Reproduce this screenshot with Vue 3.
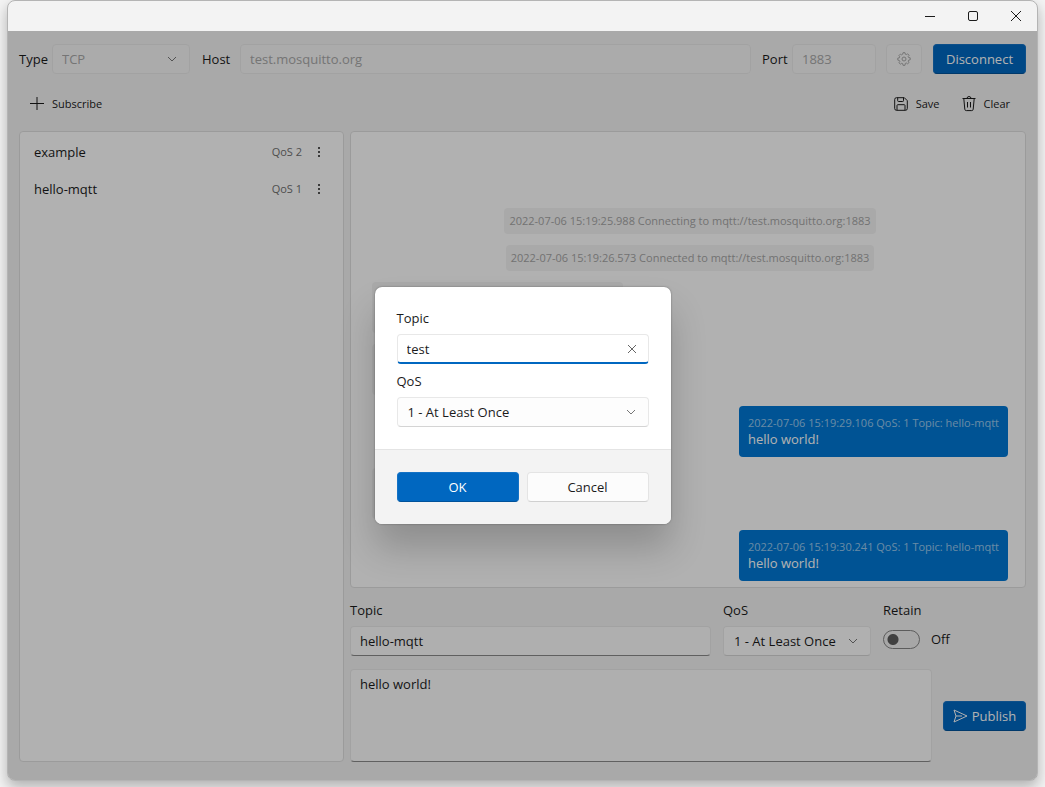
<script setup>
import { ref } from 'vue'

const subscriptions = ref([
  { topic: 'example', qos: 2 },
  { topic: 'hello-mqtt', qos: 1 },
])

const messages = ref([
  { kind: 'notice', head: '2022-07-06 15:19:25.988 Connecting to mqtt://test.mosquitto.org:1883' },
  { kind: 'notice', head: '2022-07-06 15:19:26.573 Connected to mqtt://test.mosquitto.org:1883' },
  { kind: 'received' },
  { kind: 'received' },
  { kind: 'sent', head: '2022-07-06 15:19:29.106 QoS: 1 Topic: hello-mqtt', body: 'hello world!' },
  { kind: 'received' },
  { kind: 'sent', head: '2022-07-06 15:19:30.241 QoS: 1 Topic: hello-mqtt', body: 'hello world!' },
])

const host = ref('test.mosquitto.org')
const port = ref('1883')
const publishTopic = ref('hello-mqtt')
const payload = ref('hello world!')
const retain = ref(false)
const newTopic = ref('test')
</script>

<template>
  <div class="desktop">
  <div class="window">
    <header class="titlebar">
      <button class="caption" aria-label="Minimize">
        <svg width="12" height="12" viewBox="0 0 12 12"><path d="M1 6.5h10" /></svg>
      </button>
      <button class="caption" aria-label="Maximize">
        <svg width="12" height="12" viewBox="0 0 12 12"><rect x="1.5" y="1.5" width="9" height="9" rx="1.5" /></svg>
      </button>
      <button class="caption" aria-label="Close">
        <svg width="12" height="12" viewBox="0 0 12 12"><path d="M1 1l10 10M11 1L1 11" /></svg>
      </button>
    </header>

    <div class="client">
      <main class="app">
        <div class="connection">
          <label class="lead" for="type">Type</label>
          <div class="select type">
            <select id="type" disabled><option>TCP</option></select>
            <svg class="chevron" width="10" height="10" viewBox="0 0 10 10"><path d="M1 3l4 4 4-4" /></svg>
          </div>
          <label class="host-label" for="host">Host</label>
          <input id="host" v-model="host" class="field host" disabled />
          <label class="lead" for="port">Port</label>
          <input id="port" v-model="port" class="field port" disabled />
          <button class="btn settings" aria-label="Settings" disabled>
            <svg width="14" height="14" viewBox="0 0 14 14">
              <path d="M5.7 2.2L6 .7h2l.3 1.5 1 .4 1.3-.8 1.5 1.5-.9 1.2.4 1 1.6.3v2l-1.6.4-.4 1 .9 1.2-1.5 1.4-1.3-.8-1 .4L8 13.3H6l-.3-1.6-1-.4-1.3.8-1.5-1.4.9-1.2-.4-1-1.6-.4v-2l1.6-.3.4-1-.9-1.2 1.5-1.5 1.3.8z" />
              <circle cx="7" cy="7" r="2" />
            </svg>
          </button>
          <button class="btn primary disconnect">Disconnect</button>
        </div>

        <div class="commands">
          <button class="command">
            <svg width="14" height="14" viewBox="0 0 14 14"><path d="M7 0v13M0 6.5h14" /></svg>
            Subscribe
          </button>
          <span class="spacer"></span>
          <button class="command">
            <svg width="14" height="14" viewBox="0 0 14 14">
              <path d="M2.5.7h7.8l3 3v7.8a1.8 1.8 0 0 1-1.8 1.8h-9A1.8 1.8 0 0 1 .7 11.5v-9A1.8 1.8 0 0 1 2.5.7zM3.7.7v3a.8.8 0 0 0 .8.8h4.2a.8.8 0 0 0 .8-.8v-3M3 13.3V8.5a.8.8 0 0 1 .8-.8h6.400a.8.8 0 0 1 .8.8v4.8" />
            </svg>
            Save
          </button>
          <button class="command">
            <svg width="14" height="16" viewBox="0 0 14 16">
              <path d="M.5 2.5h13M5 2.5a2 2 0 0 1 4 0M1.800 2.500l1 10.800a1.500 1.500 0 0 0 1.500 1.300h5.400a1.500 1.500 0 0 0 1.500-1.300l1-10.800M5.500 6v5.500M8.500 6v5.500" />
            </svg>
            Clear
          </button>
        </div>

        <div class="content">
          <ul class="card subscriptions">
            <li v-for="item in subscriptions" :key="item.topic">
              <span class="name">{{ item.topic }}</span>
              <span class="qos">QoS {{ item.qos }}</span>
              <button class="more" aria-label="More">
                <svg width="4" height="12" viewBox="0 0 4 12">
                  <circle cx="2" cy="2" r="1" /><circle cx="2" cy="6" r="1" /><circle cx="2" cy="10" r="1" />
                </svg>
              </button>
            </li>
          </ul>

          <div class="session">
            <div class="card messages">
              <div v-for="(m, i) in messages" :key="i" class="message" :class="m.kind">
                <span v-if="m.head" class="head">{{ m.head }}</span>
                <span v-if="m.body" class="body">{{ m.body }}</span>
              </div>
            </div>

            <div class="options">
              <div class="topic-group">
                <label for="pub-topic">Topic</label>
                <input id="pub-topic" v-model="publishTopic" class="field" />
              </div>
              <div class="qos-group">
                <label for="pub-qos">QoS</label>
                <div class="select">
                  <select id="pub-qos"><option>1 - At Least Once</option></select>
                  <svg class="chevron" width="10" height="10" viewBox="0 0 10 10"><path d="M1 3l4 4 4-4" /></svg>
                </div>
              </div>
              <div class="retain-group">
                <label for="retain">Retain</label>
                <div class="toggle">
                  <input id="retain" v-model="retain" type="checkbox" role="switch" />
                  <span>{{ retain ? 'On' : 'Off' }}</span>
                </div>
              </div>
            </div>

            <div class="publish">
              <textarea v-model="payload" class="field" aria-label="Payload"></textarea>
              <button class="btn primary send">
                <svg width="15" height="14" viewBox="0 0 15 14"><path d="M1 1l13 6-13 6 2-6zM3 7h6" /></svg>
                Publish
              </button>
            </div>
          </div>
        </div>
      </main>

      <div class="overlay">
        <form class="dialog" role="dialog" aria-label="Subscribe" @submit.prevent>
          <div class="dialog-body">
            <label for="new-topic">Topic</label>
            <div class="clearable">
              <input id="new-topic" v-model="newTopic" class="field active" />
              <button type="button" class="clear" aria-label="Clear text">
                <svg width="10" height="10" viewBox="0 0 10 10"><path d="M1 1l8 8M9 1L1 9" /></svg>
              </button>
            </div>
            <label for="new-qos">QoS</label>
            <div class="select">
              <select id="new-qos"><option>1 - At Least Once</option></select>
              <svg class="chevron" width="10" height="10" viewBox="0 0 10 10"><path d="M1 3l4 4 4-4" /></svg>
            </div>
          </div>
          <div class="dialog-footer">
            <button class="btn primary">OK</button>
            <button type="button" class="btn">Cancel</button>
          </div>
        </form>
      </div>
    </div>
  </div>
  </div>
</template>

<style>
body {
  background: #f4f4f4;
}
</style>

<style scoped>
* {
  box-sizing: border-box;
}

.desktop {
  height: 100vh;
  min-height: 647px;
  padding: 0 7px 6px;
  overflow: hidden;
}

.window {
  display: flex;
  flex-direction: column;
  height: 100%;
  border: 1px solid #b4b4b4;
  border-radius: 8px;
  overflow: hidden;
  background: #f3f3f3;
  box-shadow: 0 6px 14px rgba(0, 0, 0, 0.28);
  color: #1b1b1b;
  font: 13px/18px "Open Sans", "Noto Sans", sans-serif;
}

button,
input,
select,
textarea {
  margin: 0;
  font: inherit;
  color: inherit;
  outline: none;
}

svg {
  flex: none;
  fill: none;
  stroke: currentColor;
  stroke-width: 1;
}

.titlebar {
  display: flex;
  justify-content: flex-end;
  height: 30px;
}

.caption {
  display: grid;
  place-items: center;
  width: 43px;
  padding: 0;
  border: 0;
  background: none;
}

.client {
  position: relative;
  flex: 1;
  min-height: 0;
}

.app {
  display: flex;
  flex-direction: column;
  height: 100%;
  padding: 13px 11px 18px;
}

.connection {
  display: flex;
  align-items: center;
}

.lead {
  width: 30px;
  margin-right: 3px;
}

.connection .lead ~ .lead {
  width: 27px;
  margin: 0 3px 0 11px;
}

.host-label {
  width: 28px;
  margin: 0 10px 0 12px;
}

.field {
  width: 100%;
  height: 30px;
  padding: 0 9px;
  border: 1px solid #e8e8e8;
  border-bottom-color: #8a8a8a;
  border-radius: 4px;
  background: #fbfbfb;
}

.field:disabled,
.select select:disabled,
.btn:disabled {
  border-color: #e9e9e9;
  background: #f5f5f5;
  color: #a8a8a8;
  opacity: 1;
}

.host {
  flex: 1;
  min-width: 0;
}

.port {
  width: 84px;
}

.select {
  position: relative;
}

.select select {
  display: block;
  width: 100%;
  height: 30px;
  padding: 0 10px;
  appearance: none;
  border: 1px solid #e8e8e8;
  border-bottom-color: #d4d4d4;
  border-radius: 4px;
  background: #fdfdfd;
}

.type {
  width: 138px;
}

.type select {
  padding: 0 9px;
}

.chevron {
  position: absolute;
  top: 10px;
  right: 13px;
  color: #767676;
  pointer-events: none;
}

.btn {
  display: flex;
  align-items: center;
  justify-content: center;
  height: 30px;
  padding: 0;
  border: 1px solid #e4e4e4;
  border-bottom-color: #d0d0d0;
  border-radius: 4px;
  background: #fcfcfc;
}

.primary {
  border-color: #1472c5;
  border-bottom-color: #00529a;
  background: #0067c0;
  color: #fff;
}

.settings {
  width: 36px;
  margin: 0 11px 0 10px;
}

.disconnect {
  width: 93px;
}

.commands {
  display: flex;
  height: 57px;
  font-size: 11px;
}

.command {
  display: flex;
  align-items: center;
  gap: 8px;
  padding: 2px 11px 0;
  border: 0;
  background: none;
}

.command:last-child {
  padding-right: 16px;
}

.spacer {
  flex: 1;
}

.content {
  display: grid;
  flex: 1;
  grid-template-columns: minmax(0, 325fr) minmax(0, 676fr);
  gap: 6px;
  min-height: 0;
}

.card {
  border: 1px solid #dedede;
  border-radius: 4px;
  background: #fefefe;
}

.subscriptions {
  margin: 0;
  padding: 1px 14px;
  list-style: none;
}

.subscriptions li {
  display: flex;
  align-items: center;
  height: 37px;
}

.name {
  flex: 1;
}

.qos {
  color: #707070;
  font-size: 11px;
}

.more {
  width: 20px;
  height: 24px;
  margin-left: 7px;
  padding: 0;
  border: 0;
  background: none;
}

.more svg {
  display: block;
  margin: auto;
  fill: currentColor;
  stroke: none;
}

.session {
  display: flex;
  flex-direction: column;
  min-width: 0;
  min-height: 0;
}

.messages {
  display: flex;
  flex: 1;
  flex-direction: column;
  justify-content: flex-end;
  gap: 11px;
  min-height: 0;
  padding: 0 17px 6px 21px;
  overflow: hidden;
}

.message {
  display: flex;
  flex: none;
  flex-direction: column;
  height: 51px;
  padding: 9px 9px 0;
  border-radius: 4px;
  background: #f3f3f3;
}

.head {
  font-size: 11px;
  line-height: 16px;
}

.body {
  line-height: 17px;
}

.notice {
  align-self: center;
  height: 26px;
  padding: 5px;
  color: #a4a4a4;
}

.received {
  align-self: flex-start;
  width: 251px;
}

.sent {
  align-self: flex-end;
  background: #0078d4;
  color: #fff;
}

.sent .head {
  color: rgba(255, 255, 255, 0.6);
}

.options {
  display: flex;
  gap: 12px;
  margin-top: 11px;
}

.options label,
.dialog label {
  display: block;
  height: 27px;
  line-height: 22px;
}

.topic-group {
  flex: 1;
}

.qos-group {
  width: 148px;
}

.retain-group {
  width: 143px;
}

.toggle {
  display: flex;
  align-items: center;
  gap: 11px;
  height: 26px;
}

.toggle input {
  width: 37px;
  height: 19px;
  appearance: none;
  border: 1px solid #858585;
  border-radius: 10px;
  background: radial-gradient(circle at 9px 50%, #5c5c5c 5px, transparent 6px) #f0f0f0;
}

.publish {
  display: flex;
  align-items: center;
  gap: 11px;
  margin-top: 13px;
}

.publish textarea {
  display: block;
  flex: 1;
  height: 93px;
  padding: 5px 9px;
  resize: none;
}

.send {
  gap: 4px;
  width: 83px;
}

.overlay {
  position: absolute;
  inset: 0;
  display: grid;
  place-items: center;
  background: rgba(0, 0, 0, 0.3);
}

.dialog {
  width: 296px;
  border-radius: 7px;
  overflow: hidden;
  background: #fff;
  box-shadow: 0 0 2px rgba(0, 0, 0, 0.4), 0 24px 36px rgba(0, 0, 0, 0.2);
}

.dialog-body {
  padding: 20px 22px 22px;
}

.clearable {
  position: relative;
  margin-bottom: 6px;
}

.active {
  display: block;
  border-bottom: 2px solid #0067c0;
  background: #fff;
}

.clear {
  position: absolute;
  top: 5px;
  right: 7px;
  display: grid;
  place-items: center;
  width: 20px;
  height: 20px;
  padding: 0;
  border: 0;
  background: none;
  color: #666;
}

.dialog-footer {
  display: grid;
  grid-template-columns: 1fr 1fr;
  gap: 8px;
  padding: 22px;
  border-top: 1px solid #e4e4e4;
  background: #f3f3f3;
}
</style>
